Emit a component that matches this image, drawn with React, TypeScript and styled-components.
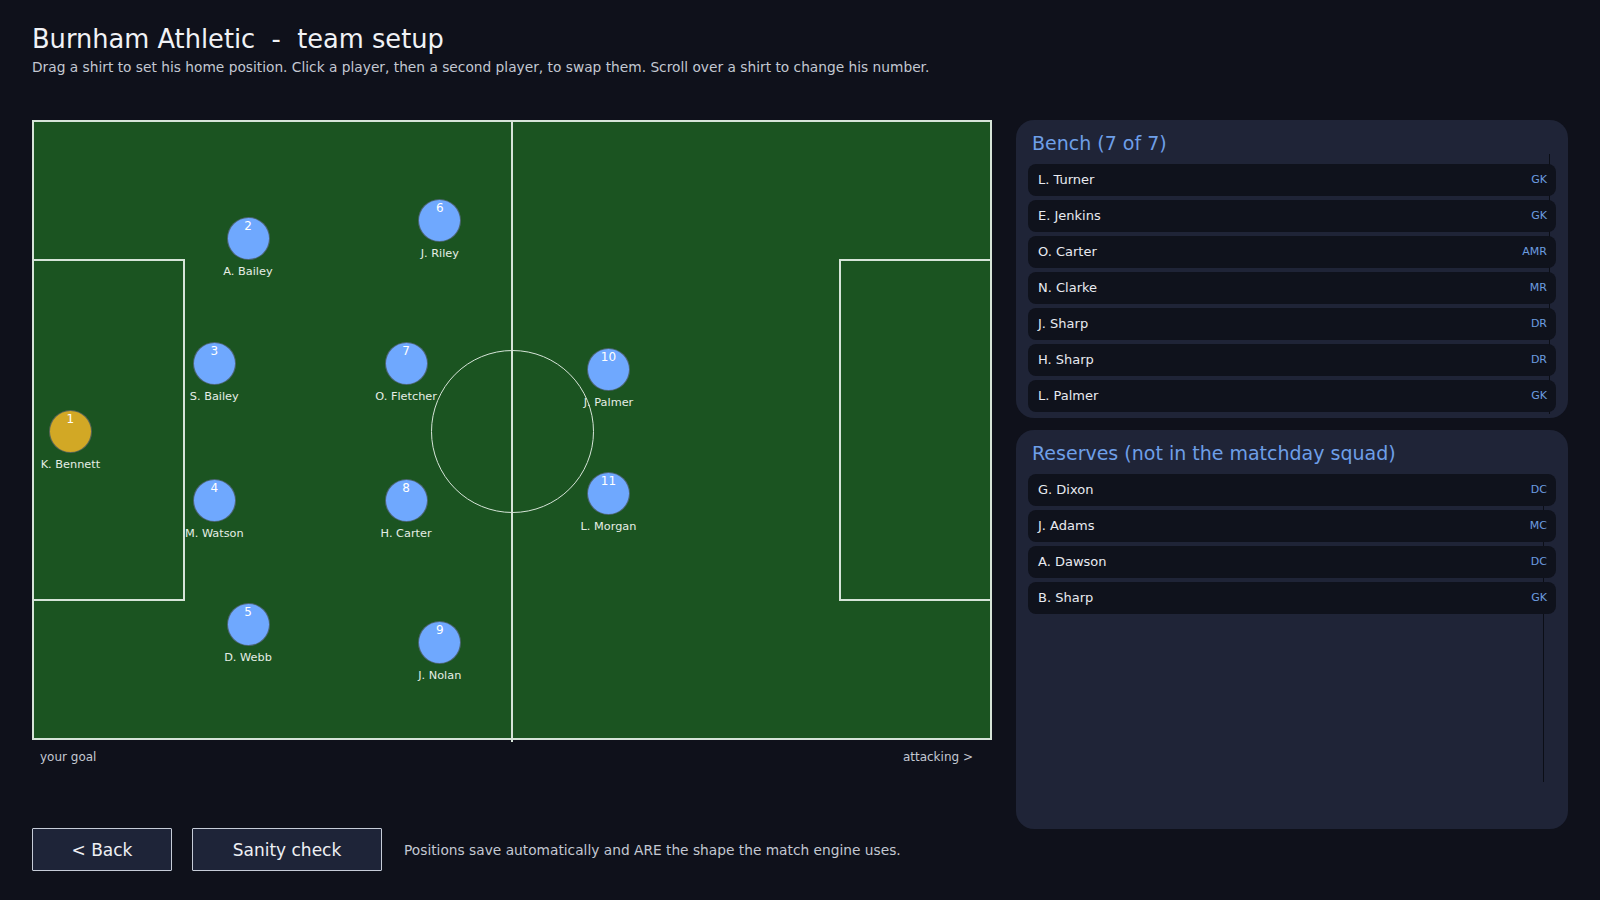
import React from "react";
import styled, { createGlobalStyle } from "styled-components";

const GlobalStyle = createGlobalStyle`
  html, body {
    margin: 0;
    padding: 0;
    background: #0f111b;
  }
  body {
    font-family: "DejaVu Sans", "Liberation Sans", sans-serif;
    color: #eef0f4;
  }
`;

const Page = styled.div`
  width: 1600px;
  height: 900px;
  box-sizing: border-box;
  padding: 24px 32px 0;
  background: #0f111b;
  overflow: hidden;
`;

const Title = styled.h1`
  margin: 0;
  font-size: 25.7px;
  line-height: 31px;
  font-weight: normal;
  color: #f0f2f6;
  white-space: pre;
`;

const Subtitle = styled.p`
  margin: 4px 0 0;
  font-size: 13.75px;
  line-height: 17px;
  color: #c3c8d2;
`;

const Main = styled.div`
  display: flex;
  gap: 24px;
  margin-top: 44px;
`;

const LeftColumn = styled.div`
  display: flex;
  flex-direction: column;
  width: 960px;
`;

const Pitch = styled.div`
  position: relative;
  width: 960px;
  height: 620px;
  box-sizing: border-box;
  border: 2px solid #d6e4d8;
  background: #1b5421;
`;

const HalfwayLine = styled.div`
  position: absolute;
  left: 477px;
  top: -2px;
  bottom: -4px;
  width: 2px;
  background: #d6e4d8;
`;

const CenterCircle = styled.div`
  position: absolute;
  left: 478px;
  top: 309px;
  width: 163px;
  height: 163px;
  margin: -81.5px 0 0 -81.5px;
  box-sizing: border-box;
  border: 1.5px solid #d6e4d8;
  border-radius: 50%;
`;

const PenaltyBox = styled.div<{ $side: "left" | "right" }>`
  position: absolute;
  top: 137px;
  width: 153px;
  height: 342px;
  box-sizing: border-box;
  border: 2px solid #d6e4d8;
  ${(p) => (p.$side === "left" ? "left: -2px;" : "right: -2px;")}
`;

const Token = styled.div`
  position: absolute;
  width: 43px;
  height: 43px;
  z-index: 2;
`;

const Shirt = styled.div<{ $keeper?: boolean }>`
  width: 43px;
  height: 43px;
  box-sizing: border-box;
  border-radius: 50%;
  border: 1.5px solid rgba(70, 90, 95, 0.85);
  background: ${(p) => (p.$keeper ? "#d2a825" : "#6fa8fe")};
  color: #ffffff;
  font-size: 12px;
  line-height: 14px;
  padding-top: 1px;
  text-align: center;
`;

const ShirtName = styled.div`
  position: absolute;
  left: 50%;
  top: 48px;
  transform: translateX(-50%);
  white-space: nowrap;
  font-size: 11.3px;
  line-height: 14px;
  color: #e6eee6;
`;

const Legend = styled.div`
  display: flex;
  justify-content: space-between;
  margin-top: 10px;
  padding: 0 19px 0 8px;
  font-size: 12px;
  line-height: 15px;
  color: #c3c8d2;
`;

const ActionBar = styled.div`
  display: flex;
  align-items: center;
  gap: 20px;
  margin-top: 63px;
`;

const Button = styled.button<{ $width: number }>`
  width: ${(p) => p.$width}px;
  height: 43px;
  box-sizing: border-box;
  border: 1px solid #c6ccd8;
  border-radius: 1px;
  background: #1e2438;
  color: #eef0f4;
  font-family: "DejaVu Sans", "Liberation Sans", sans-serif;
  font-size: 17px;
  cursor: pointer;
`;

const Hint = styled.span`
  margin-left: 2px;
  font-size: 13.75px;
  color: #c3c8d2;
`;

const SideColumn = styled.div`
  flex: 1;
  display: flex;
  flex-direction: column;
  gap: 12px;
`;

const Panel = styled.section<{ $height: number }>`
  position: relative;
  height: ${(p) => p.$height}px;
  box-sizing: border-box;
  padding: 12px 12px 0;
  border-radius: 18px;
  background: #1f2437;
  overflow: hidden;
`;

const PanelTitle = styled.h2`
  margin: 0 0 10px 4px;
  font-size: 19px;
  line-height: 22px;
  font-weight: normal;
  color: #6e9fe8;
`;

const ScrollTrack = styled.div<{ $top: number; $bottom: number; $right: number }>`
  position: absolute;
  top: ${(p) => p.$top}px;
  bottom: ${(p) => p.$bottom}px;
  right: ${(p) => p.$right}px;
  width: 1px;
  background: #0b0e16;
`;

const List = styled.ul`
  position: relative;
  z-index: 1;
  list-style: none;
  margin: 0;
  padding: 0;
  display: flex;
  flex-direction: column;
  gap: 4px;
`;

const Row = styled.li`
  display: flex;
  align-items: center;
  justify-content: space-between;
  height: 32px;
  padding: 0 9px 1px 10px;
  box-sizing: border-box;
  border-radius: 8px;
  background: #0f121c;
`;

const RowName = styled.span`
  font-size: 13px;
  color: #e8eaf0;
`;

const RowPos = styled.span`
  font-size: 11px;
  color: #6c9de0;
`;

interface Player {
  num: number;
  name: string;
  x: number;
  y: number;
  keeper?: boolean;
}

const lineup: Player[] = [
  { num: 1, name: "K. Bennett", x: 36.4, y: 309.6, keeper: true },
  { num: 2, name: "A. Bailey", x: 214, y: 116.8 },
  { num: 6, name: "J. Riley", x: 405.8, y: 98.4 },
  { num: 3, name: "S. Bailey", x: 180.3, y: 241.2 },
  { num: 7, name: "O. Fletcher", x: 372.1, y: 241.2 },
  { num: 10, name: "J. Palmer", x: 574.5, y: 247.4 },
  { num: 4, name: "M. Watson", x: 180.3, y: 378 },
  { num: 8, name: "H. Carter", x: 372.1, y: 378 },
  { num: 11, name: "L. Morgan", x: 574.5, y: 371.9 },
  { num: 5, name: "D. Webb", x: 214, y: 502.5 },
  { num: 9, name: "J. Nolan", x: 405.8, y: 520.8 },
];

const bench = [
  ["L. Turner", "GK"],
  ["E. Jenkins", "GK"],
  ["O. Carter", "AMR"],
  ["N. Clarke", "MR"],
  ["J. Sharp", "DR"],
  ["H. Sharp", "DR"],
  ["L. Palmer", "GK"],
];

const reserves = [
  ["G. Dixon", "DC"],
  ["J. Adams", "MC"],
  ["A. Dawson", "DC"],
  ["B. Sharp", "GK"],
];

const App = () => {
  return (
    <>
      <GlobalStyle />
      <Page>
        <Title>{"Burnham Athletic  -  team setup"}</Title>
        <Subtitle>
          Drag a shirt to set his home position. Click a player, then a second
          player, to swap them. Scroll over a shirt to change his number.
        </Subtitle>
        <Main>
          <LeftColumn>
            <Pitch>
              <PenaltyBox $side="left" />
              <PenaltyBox $side="right" />
              <HalfwayLine />
              <CenterCircle />
              {lineup.map((p) => (
                <Token
                  key={p.num}
                  style={{ left: p.x - 21.5, top: p.y - 21.5 }}
                >
                  <Shirt $keeper={p.keeper}>{p.num}</Shirt>
                  <ShirtName>{p.name}</ShirtName>
                </Token>
              ))}
            </Pitch>
            <Legend>
              <span>your goal</span>
              <span>attacking &gt;</span>
            </Legend>
            <ActionBar>
              <Button $width={140}>&lt; Back</Button>
              <Button $width={190}>Sanity check</Button>
              <Hint>
                Positions save automatically and ARE the shape the match engine
                uses.
              </Hint>
            </ActionBar>
          </LeftColumn>
          <SideColumn>
            <Panel $height={298}>
              <PanelTitle>Bench (7 of 7)</PanelTitle>
              <ScrollTrack $top={34} $bottom={4} $right={18} />
              <List>
                {bench.map(([name, pos]) => (
                  <Row key={name}>
                    <RowName>{name}</RowName>
                    <RowPos>{pos}</RowPos>
                  </Row>
                ))}
              </List>
            </Panel>
            <Panel $height={399}>
              <PanelTitle>Reserves (not in the matchday squad)</PanelTitle>
              <ScrollTrack $top={75} $bottom={47} $right={24} />
              <List>
                {reserves.map(([name, pos]) => (
                  <Row key={name}>
                    <RowName>{name}</RowName>
                    <RowPos>{pos}</RowPos>
                  </Row>
                ))}
              </List>
            </Panel>
          </SideColumn>
        </Main>
      </Page>
    </>
  );
};

export default App;
